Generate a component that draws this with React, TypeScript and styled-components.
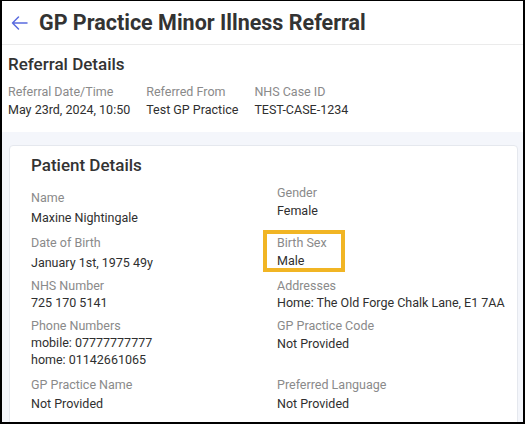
import React from "react";
import styled, { createGlobalStyle } from "styled-components";

const Global = createGlobalStyle`
  html, body { margin: 0; padding: 0; background: #000; }
  body { font-family: Roboto, "Liberation Sans", Arial, sans-serif; }
  *, *::before, *::after { box-sizing: border-box; }
`;

const Frame = styled.div`
  width: 525px;
  height: 424px;
  border-style: solid;
  border-color: #000;
  border-width: 1px 2px 2px 2px;
  background: #fff;
  overflow: hidden;
  display: flex;
  flex-direction: column;
`;

const Header = styled.header`
  height: 44px;
  flex: none;
  display: flex;
  align-items: center;
  gap: 11px;
  padding-left: 8px;
  border-bottom: 1px solid #ebebeb;
`;

const BackButton = styled.button`
  border: 0;
  background: none;
  padding: 0;
  width: 18px;
  height: 18px;
  display: flex;
  align-items: center;
  justify-content: center;
  cursor: pointer;
`;

const Title = styled.h1`
  margin: 0;
  font-size: 21.5px;
  line-height: 26px;
  font-weight: 700;
  color: #333;
`;

const ReferralSection = styled.section`
  flex: none;
  height: 87px;
  padding: 8px 6px 0;
`;

const SectionTitle = styled.h2<{ $size?: number }>`
  margin: 0;
  font-size: ${(p) => p.$size ?? 17}px;
  line-height: 22px;
  font-weight: 500;
  color: #333;
`;

const InfoRow = styled.div`
  display: flex;
  gap: 16px;
  margin-top: 8px;
`;

const Body = styled.div`
  flex: 1;
  background: #f4f6fb;
  padding: 13px 5px 0 7px;
  overflow: hidden;
`;

const Card = styled.div`
  background: #fff;
  border: 1px solid #e5e8ee;
  border-radius: 4px;
  height: 330px;
  padding: 8px 20px 0 21px;
`;

const FieldGrid = styled.div`
  display: grid;
  grid-template-columns: 246px 1fr;
  row-gap: 6px;
  margin-top: 8px;
  align-items: start;
`;

const Field = styled.div<{ $gap?: number; $offset?: number; $highlight?: boolean }>`
  position: relative;
  display: flex;
  flex-direction: column;
  gap: ${(p) => p.$gap ?? 0}px;
  padding-top: ${(p) => p.$offset ?? 0}px;
  white-space: nowrap;
  ${(p) =>
    p.$highlight &&
    `
    &::after {
      content: "";
      position: absolute;
      left: -14px;
      top: -2px;
      width: 82px;
      height: 42px;
      border: 4px solid #f1b524;
      pointer-events: none;
    }
  `}
`;

const Label = styled.span`
  font-size: 12.5px;
  line-height: 17px;
  color: #8a8a8a;
`;

const Value = styled.span`
  font-size: 12.5px;
  line-height: 17px;
  color: #2f2f2f;
`;

const ValueLines = styled.div`
  display: flex;
  flex-direction: column;
`;

const ArrowIcon = () => (
  <svg width="17" height="16" viewBox="0 0 17 16" fill="none">
    <path
      d="M16 8H1.5M7.5 2L1.5 8l6 6"
      stroke="#5a6bdf"
      strokeWidth="1.5"
      strokeLinecap="round"
      strokeLinejoin="round"
    />
  </svg>
);

type FieldData = {
  label: string;
  values: string[];
  gap?: number;
  offset?: number;
  highlight?: boolean;
};

const patientFields: FieldData[] = [
  { label: "Name", values: ["Maxine Nightingale"], gap: 3, offset: 5 },
  { label: "Gender", values: ["Female"], gap: 1 },
  { label: "Date of Birth", values: ["January 1st, 1975 49y"], gap: 3, offset: 2 },
  { label: "Birth Sex", values: ["Male"], gap: 1, offset: 2, highlight: true },
  { label: "NHS Number", values: ["725 170 5141"] },
  { label: "Addresses", values: ["Home: The Old Forge Chalk Lane, E1 7AA"] },
  { label: "Phone Numbers", values: ["mobile: 07777777777", "home: 01142661065"] },
  { label: "GP Practice Code", values: ["Not Provided"], gap: 1 },
  { label: "GP Practice Name", values: ["Not Provided"], gap: 2, offset: 2 },
  { label: "Preferred Language", values: ["Not Provided"], gap: 2, offset: 2 },
];

const referralInfo = [
  { label: "Referral Date/Time", value: "May 23rd, 2024, 10:50" },
  { label: "Referred From", value: "Test GP Practice" },
  { label: "NHS Case ID", value: "TEST-CASE-1234" },
];

export default function App() {
  return (
    <>
      <Global />
      <Frame>
        <Header>
          <BackButton aria-label="Back">
            <ArrowIcon />
          </BackButton>
          <Title>GP Practice Minor Illness Referral</Title>
        </Header>
        <ReferralSection>
          <SectionTitle>Referral Details</SectionTitle>
          <InfoRow>
            {referralInfo.map((i) => (
              <Field key={i.label} $gap={1}>
                <Label>{i.label}</Label>
                <Value>{i.value}</Value>
              </Field>
            ))}
          </InfoRow>
        </ReferralSection>
        <Body>
          <Card>
            <SectionTitle $size={17}>Patient Details</SectionTitle>
            <FieldGrid>
              {patientFields.map((f) => (
                <Field key={f.label} $gap={f.gap} $offset={f.offset} $highlight={f.highlight}>
                  <Label>{f.label}</Label>
                  <ValueLines>
                    {f.values.map((v) => (
                      <Value key={v}>{v}</Value>
                    ))}
                  </ValueLines>
                </Field>
              ))}
            </FieldGrid>
          </Card>
        </Body>
      </Frame>
    </>
  );
}
